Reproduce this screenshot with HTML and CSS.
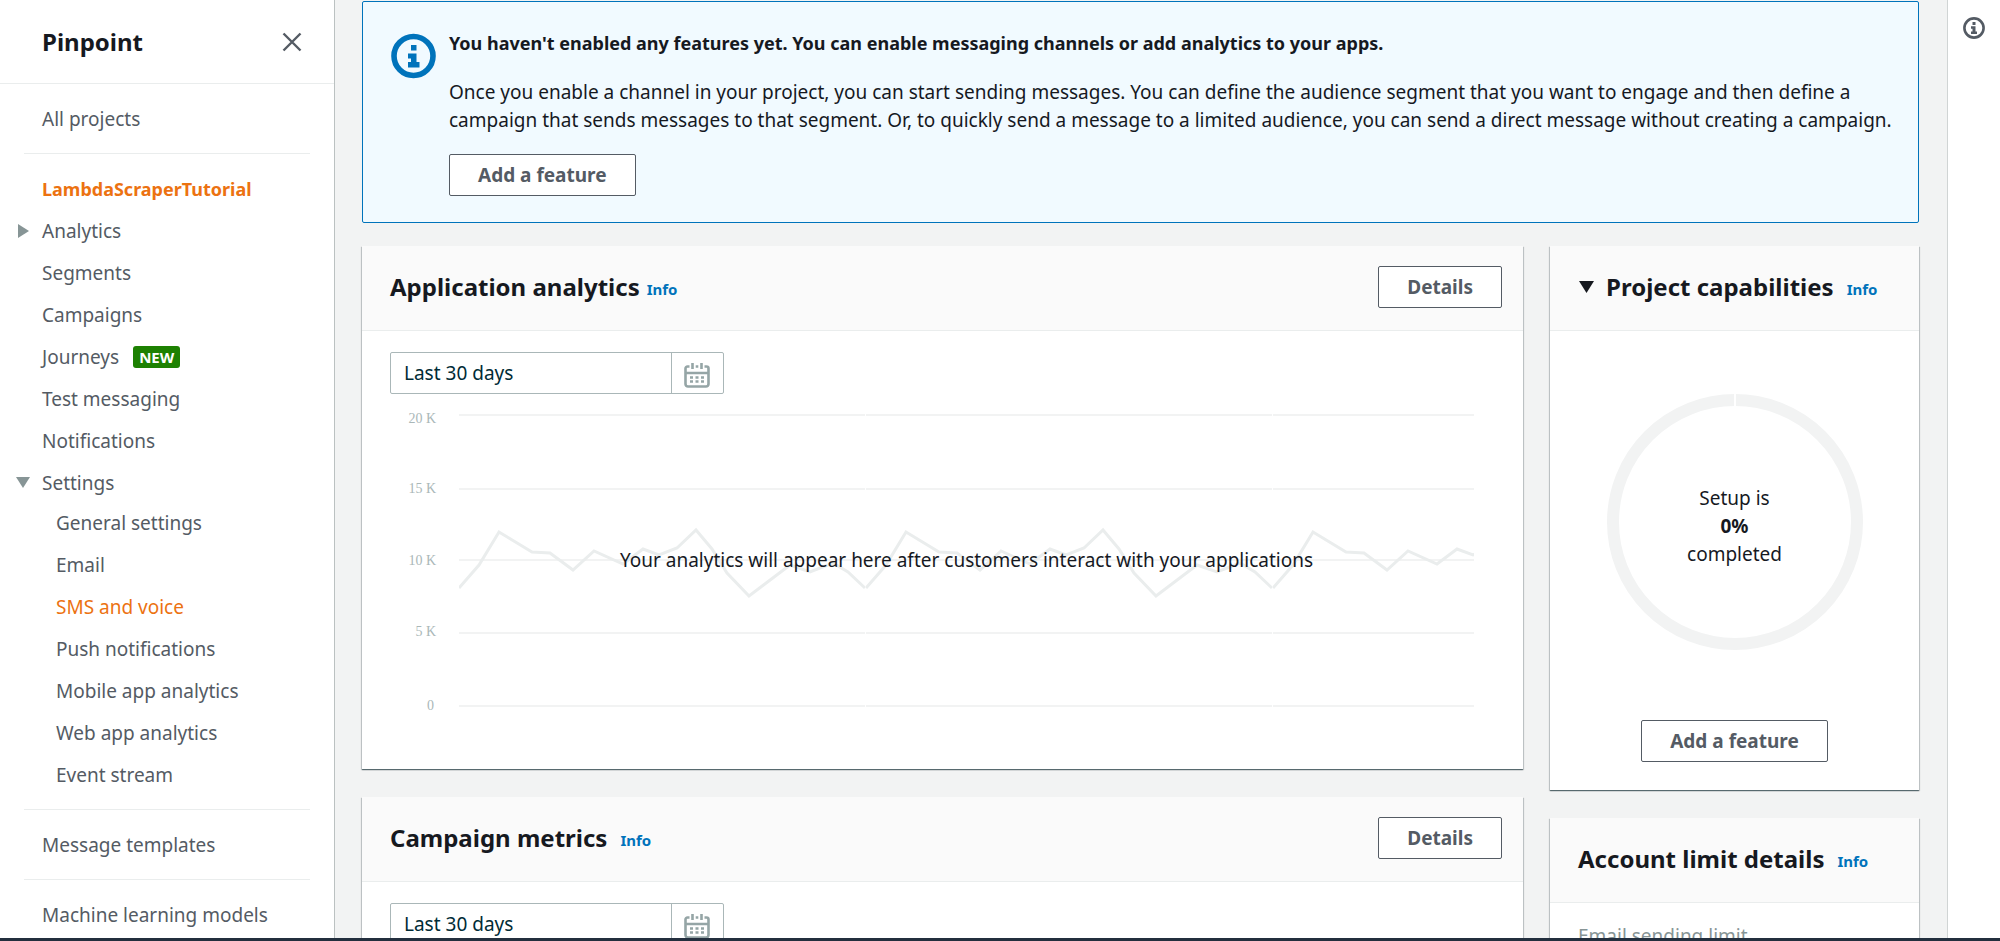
FILE: index.html
```html
<!DOCTYPE html>
<html lang="en">
<head>
    <meta charset="utf-8">
    <title>Pinpoint</title>
    <link rel="stylesheet" href="styles.css">
</head>
<body>
    <div class="app">
        <nav class="sidebar">
            <div class="sidebar-header">
                <h1>Pinpoint</h1>
                <button class="icon-button" aria-label="Close navigation">
                    <svg width="20" height="20" viewBox="0 0 20 20"><path d="M1.500 1.500l17 17M18.500 1.500l-17 17" stroke="#545b64" stroke-width="2.400" fill="none"/></svg>
                </button>
            </div>
            <ul class="nav-list">
                <li><a href="#">All projects</a></li>
            </ul>
            <hr>
            <ul class="nav-list">
                <li><a href="#" class="project">LambdaScraperTutorial</a></li>
                <li class="expandable">
                    <svg class="caret" width="14" height="14" viewBox="0 0 14 14"><path d="M2 0l11 7-11 7z" fill="#879596"/></svg>
                    <a href="#">Analytics</a>
                </li>
                <li><a href="#">Segments</a></li>
                <li><a href="#">Campaigns</a></li>
                <li><a href="#">Journeys</a><span class="badge">NEW</span></li>
                <li><a href="#">Test messaging</a></li>
                <li><a href="#">Notifications</a></li>
                <li class="expandable">
                    <svg class="caret" width="14" height="14" viewBox="0 0 14 14"><path d="M0 1h14l-7 11z" fill="#879596"/></svg>
                    <a href="#">Settings</a>
                </li>
            </ul>
            <ul class="nav-list nav-sub">
                <li><a href="#">General settings</a></li>
                <li><a href="#">Email</a></li>
                <li><a href="#" class="active">SMS and voice</a></li>
                <li><a href="#">Push notifications</a></li>
                <li><a href="#">Mobile app analytics</a></li>
                <li><a href="#">Web app analytics</a></li>
                <li><a href="#">Event stream</a></li>
            </ul>
            <hr>
            <ul class="nav-list">
                <li><a href="#">Message templates</a></li>
            </ul>
            <hr>
            <ul class="nav-list">
                <li><a href="#">Machine learning models</a></li>
            </ul>
        </nav>

        <main class="content">
            <section class="flash">
                <svg class="flash-icon" width="46" height="46" viewBox="0 0 46 46">
                    <circle cx="22.500" cy="23" r="19.500" fill="none" stroke="#0073bb" stroke-width="5.600"/>
                    <path d="M20 12h5.500v5.500h-5.500zM17 20.500h8.500v8.500h3v5.500h-11.500v-5.500h3v-3.500h-3z" fill="#0073bb"/>
                </svg>
                <div class="flash-body">
                    <h2>You haven't enabled any features yet. You can enable messaging channels or add analytics to your apps.</h2>
                    <p>Once you enable a channel in your project, you can start sending messages. You can define the audience segment that you want to engage and then define a campaign that sends messages to that segment. Or, to quickly send a message to a limited audience, you can send a direct message without creating a campaign.</p>
                    <button class="btn">Add a feature</button>
                </div>
            </section>

            <div class="columns">
                <div class="col-wide">
                    <section class="card">
                        <header class="card-header">
                            <h2>Application analytics</h2>
                            <a href="#" class="info info-near">Info</a>
                            <button class="btn btn-right">Details</button>
                        </header>
                        <div class="card-body">
                            <div class="date-picker">
                                <input type="text" value="Last 30 days" aria-label="Analytics date range" readonly>
                                <button aria-label="Open calendar">
                                    <svg width="26" height="26" viewBox="0 0 26 26">
                                        <path d="M5.500 3.500H3.500a2 2 0 0 0-2 2V21a2.500 2.500 0 0 0 2.500 2.500h18a2.500 2.500 0 0 0 2.500-2.500V5.500a2 2 0 0 0-2-2H20.500M1.500 10h23" fill="none" stroke="#95a5a6" stroke-width="2.600"/>
                                        <path d="M8.500 0v6M17.500 0v6M11.700 3.500h2.600" fill="none" stroke="#95a5a6" stroke-width="2.600"/>
                                        <path d="M6 14.500h3M11.500 14.500h3M17 14.500h3M6 18.500h3M11.500 18.500h3M17 18.500h3" fill="none" stroke="#95a5a6" stroke-width="2.600"/>
                                    </svg>
                                </button>
                            </div>
                            <div class="chart">
                                <svg class="chart-axis" width="48" height="320">
                                    <text x="46" y="29" text-anchor="end">20 K</text>
                                    <text x="46" y="99" text-anchor="end">15 K</text>
                                    <text x="46" y="171" text-anchor="end">10 K</text>
                                    <text x="46" y="242" text-anchor="end">5 K</text>
                                    <text x="44" y="316" text-anchor="end">0</text>
                                </svg>
                                <svg class="chart-plot" width="100%" height="320">
                                    <defs>
                                        <!-- one tile of sample data, repeated across the plot -->
                                        <pattern id="sample" width="407" height="320" patternUnits="userSpaceOnUse">
                                            <path d="M0 21h406M0 95h406M0 166h406M0 239h406M0 312h406" stroke="#f2f3f3" stroke-width="2" fill="none"/>
                                            <path d="M0 194L20 171L40 138L73 158L91 159L114 176L135 157L164 170L184 155L200 161L218 154L237 136L253 155L268 179L290 202L331 171L351 178L374 169L389 178L406 194" stroke="#eaeded" stroke-width="3" fill="none"/>
                                        </pattern>
                                    </defs>
                                    <rect width="100%" height="320" fill="url(#sample)"/>
                                </svg>
                                <p class="chart-message">Your analytics will appear here after customers interact with your applications</p>
                            </div>
                        </div>
                    </section>

                    <section class="card">
                        <header class="card-header">
                            <h2>Campaign metrics</h2>
                            <a href="#" class="info">Info</a>
                            <button class="btn btn-right">Details</button>
                        </header>
                        <div class="card-body">
                            <div class="date-picker">
                                <input type="text" value="Last 30 days" aria-label="Campaign date range" readonly>
                                <button aria-label="Open calendar">
                                    <svg width="26" height="26" viewBox="0 0 26 26">
                                        <path d="M5.500 3.500H3.500a2 2 0 0 0-2 2V21a2.500 2.500 0 0 0 2.500 2.500h18a2.500 2.500 0 0 0 2.500-2.500V5.500a2 2 0 0 0-2-2H20.500M1.500 10h23" fill="none" stroke="#95a5a6" stroke-width="2.600"/>
                                        <path d="M8.500 0v6M17.500 0v6M11.700 3.500h2.600" fill="none" stroke="#95a5a6" stroke-width="2.600"/>
                                        <path d="M6 14.500h3M11.500 14.500h3M17 14.500h3M6 18.500h3M11.500 18.500h3M17 18.500h3" fill="none" stroke="#95a5a6" stroke-width="2.600"/>
                                    </svg>
                                </button>
                            </div>
                        </div>
                    </section>
                </div>

                <div class="col-narrow">
                    <section class="card">
                        <header class="card-header">
                            <svg class="header-caret" width="16" height="14" viewBox="0 0 16 14"><path d="M1 1h15l-7.500 12z" fill="#16191f"/></svg>
                            <h2>Project capabilities</h2>
                            <a href="#" class="info">Info</a>
                        </header>
                        <div class="card-body setup">
                            <div class="donut">
                                <svg width="256" height="256" viewBox="0 0 256 256">
                                    <circle cx="128" cy="128" r="122" fill="none" stroke="#f2f3f3" stroke-width="12"/>
                                    <path d="M128 0v12" stroke="#fff" stroke-width="2"/>
                                </svg>
                                <p>Setup is<br><b>0%</b><br>completed</p>
                            </div>
                            <button class="btn">Add a feature</button>
                        </div>
                    </section>

                    <section class="card">
                        <header class="card-header">
                            <h2>Account limit details</h2>
                            <a href="#" class="info">Info</a>
                        </header>
                        <div class="card-body limits">
                            <p class="limit-label">Email sending limit</p>
                        </div>
                    </section>
                </div>
            </div>
        </main>

        <aside class="help-panel">
            <button class="icon-button" aria-label="Open help">
                <svg width="24" height="24" viewBox="0 0 24 24">
                    <circle cx="12" cy="12" r="9.600" fill="none" stroke="#545b64" stroke-width="2.600"/>
                    <path d="M10.500 6h3v3h-3zM9 10.300h4.500v5.200h1.500v2.500H9v-2.500h1.500v-2.700H9z" fill="#545b64"/>
                </svg>
            </button>
        </aside>
    </div>
    <footer class="footer"></footer>
</body>
</html>
```
FILE: styles.css
```css
* {
    box-sizing: border-box;
}
body {
    margin: 0;
    height: 100vh;
    display: flex;
    flex-direction: column;
    background-color: #f2f3f3;
    color: #16191f;
    font-family: "Noto Sans", "Open Sans", sans-serif;
    font-size: 19px;
    line-height: 28px;
}
h1, h2, p, ul {
    margin: 0;
    padding: 0;
}
a {
    color: inherit;
    text-decoration: none;
}
svg {
    display: block;
}
.app {
    flex: 1;
    min-height: 0;
    display: flex;
}
.footer {
    height: 3px;
    background-color: #232f3e;
}

/* sidebar */
.sidebar {
    width: 335px;
    flex: none;
    overflow: auto;
    scrollbar-width: none;
    background-color: #fff;
    border-right: 1px solid #bbc1c1;
    color: #545b64;
}
.sidebar-header {
    display: flex;
    justify-content: space-between;
    align-items: center;
    height: 84px;
    padding: 0 32px 0 42px;
    border-bottom: 1px solid #eaeded;
}
.sidebar-header h1 {
    font-size: 24px;
    color: #16191f;
}
.icon-button {
    padding: 0;
    border: none;
    background: none;
    cursor: pointer;
}
.nav-list {
    list-style: none;
    padding: 21px 42px 20px;
    display: flex;
    flex-direction: column;
    gap: 14px;
}
.nav-list li {
    display: flex;
    align-items: center;
}
.nav-list .project {
    color: #ec7211;
    font-size: 18px;
    font-weight: bold;
}
.nav-list .active {
    color: #ec7211;
}
.expandable {
    margin-left: -26px;
    gap: 12px;
}
.nav-sub {
    padding-top: 0;
    padding-left: 56px;
    margin-top: -8px;
}
.sidebar hr {
    margin: 0 24px;
    border: none;
    border-top: 1px solid #eaeded;
}
.badge {
    margin-left: 14px;
    padding: 0 6px;
    border-radius: 3px;
    background-color: #1d8102;
    color: #fff;
    font-size: 15px;
    font-weight: bold;
    line-height: 22px;
}

/* main area */
.content {
    flex: 1;
    min-width: 0;
    overflow: auto;
    scrollbar-width: none;
    padding: 1px 28px 0 27px;
}
.flash {
    display: flex;
    gap: 12px;
    padding: 27px 20px 26px 28px;
    border: 1px solid #0073bb;
    border-radius: 2px;
    background-color: #f1faff;
}
.flash-icon {
    flex: none;
    margin-top: 4px;
}
.flash h2 {
    font-size: 18px;
}
.flash p {
    margin: 21px 0 20px;
}
.btn {
    height: 42px;
    padding: 0 28px;
    border: 1px solid #545b64;
    border-radius: 2px;
    background-color: #fff;
    color: #545b64;
    font: inherit;
    font-weight: bold;
    cursor: pointer;
}
.btn:hover {
    background-color: #fafafa;
}
.columns {
    display: grid;
    grid-template-columns: repeat(12, 1fr);
    gap: 27px;
    margin-top: 23px;
}
.col-wide, .col-narrow {
    display: flex;
    flex-direction: column;
    gap: 28px;
}
.col-wide {
    grid-column: span 9;
}
.col-narrow {
    grid-column: span 3;
}
.card {
    background-color: #fff;
    box-shadow: 0 1px 1px 0 rgba(0, 28, 36, 0.5), 1px 1px 1px 0 rgba(0, 28, 36, 0.15), -1px 1px 1px 0 rgba(0, 28, 36, 0.15);
}
.card-header {
    display: flex;
    align-items: center;
    height: 85px;
    padding: 0 21px 3px 28px;
    border-bottom: 1px solid #eaeded;
    background-color: #fafafa;
}
.card-header h2 {
    font-size: 24px;
}
.info {
    margin: 4px 0 0 13px;
    color: #0073bb;
    font-size: 15px;
    font-weight: bold;
}
.info-near {
    margin-left: 7px;
}
.btn-right {
    margin-left: auto;
}
.header-caret {
    margin-right: 12px;
}
.card-body {
    padding: 21px 28px 55px;
}

/* date picker */
.date-picker {
    display: flex;
    width: 334px;
    height: 42px;
    border: 1px solid #aab7b8;
    border-radius: 2px;
}
.date-picker input {
    flex: 1;
    min-width: 0;
    padding: 0 13px;
    border: none;
    background: none;
    color: #002b36;
    font: inherit;
}
.date-picker button {
    width: 52px;
    padding: 6px 0 0 12px;
    border: none;
    border-left: 1px solid #aab7b8;
    background: none;
}

/* chart */
.chart {
    display: grid;
    grid-template-columns: 48px minmax(0, 1fr);
    column-gap: 21px;
    padding-right: 21px;
}
.chart-axis {
    fill: #aab7b8;
    font-family: "Liberation Serif", serif;
    font-size: 14px;
}
.chart-plot, .chart-message {
    grid-area: 1 / 2;
}
.chart-message {
    padding-top: 152px;
    text-align: center;
}

/* setup donut */
.setup {
    display: flex;
    flex-direction: column;
    align-items: center;
    gap: 70px;
    padding: 63px 28px 28px;
}
.donut {
    display: grid;
    text-align: center;
}
.donut svg, .donut p {
    grid-area: 1 / 1;
}
.donut p {
    padding-top: 90px;
}
.limits {
    padding-top: 19px;
}
.limit-label {
    color: #879596;
}

/* help panel */
.help-panel {
    width: 53px;
    flex: none;
    display: flex;
    justify-content: center;
    align-items: flex-start;
    padding-top: 16px;
    border-left: 1px solid #d0d4d4;
    background-color: #fff;
}
```
